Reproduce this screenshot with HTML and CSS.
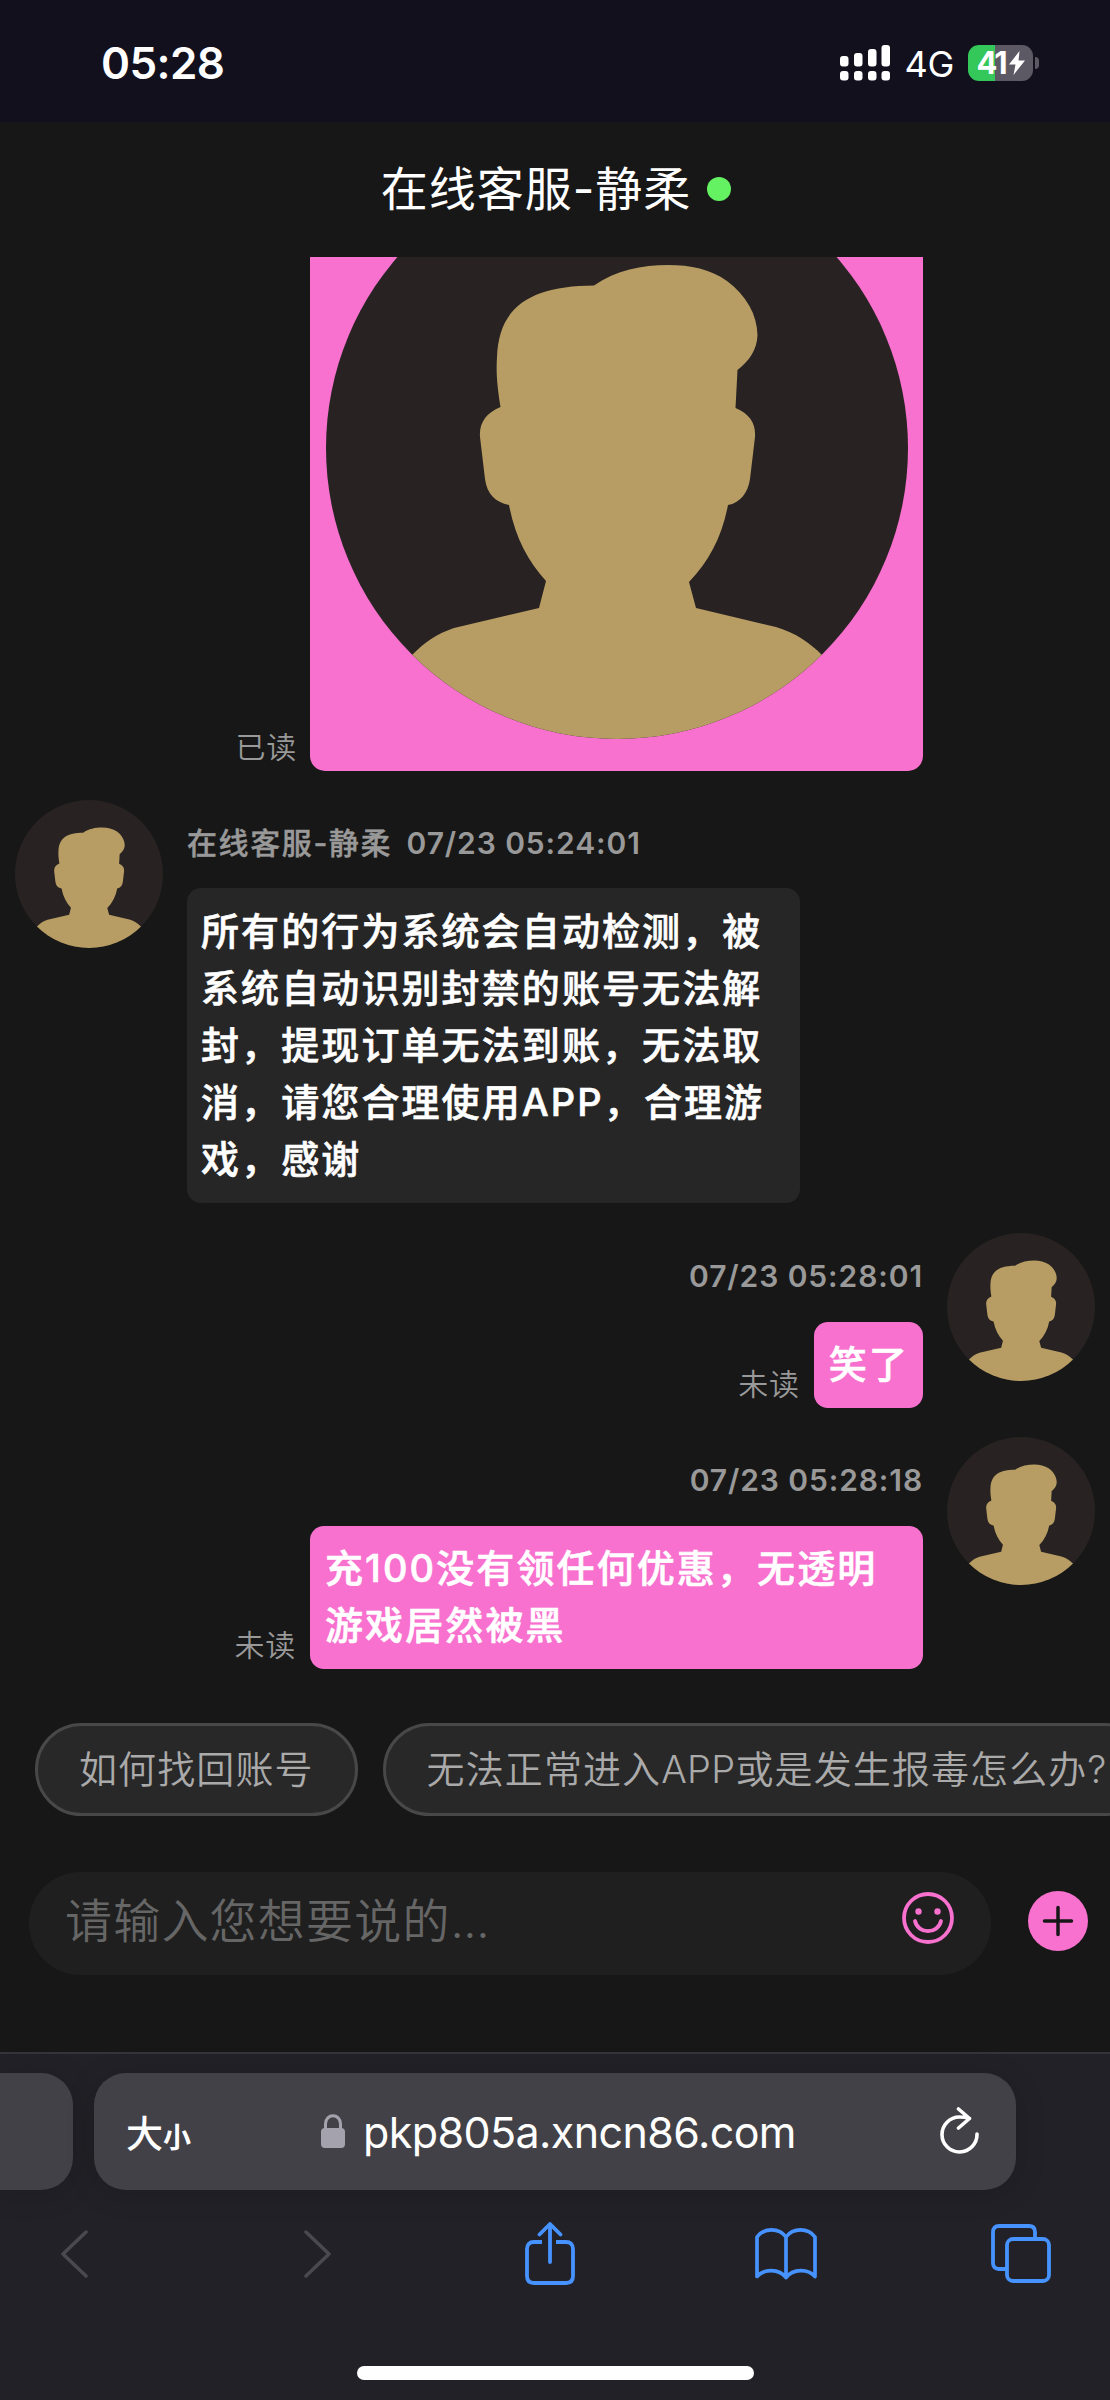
FILE: index.html
```html
<!DOCTYPE html>
<html lang="zh-CN">
<head>
<meta charset="utf-8">
<title>在线客服</title>
<link rel="stylesheet" href="styles.css">
</head>
<body>
<svg class="defs" aria-hidden="true">
  <defs>
    <clipPath id="disc"><circle cx="291" cy="291" r="291"/></clipPath>
    <symbol id="person" viewBox="0 0 582 582">
      <circle cx="291" cy="291" r="291" fill="#282322"/>
      <path clip-path="url(#disc)" fill="#b79d63" d="M268 128.500C290 113 316 108 342 108C365 108 384 112 401 124C421 139 431 158 431.500 178C431 193 423 204 411.500 213L409.500 251C424 257 430 267 429 280L424 322C422 336 414 346 402 348C396 380 383 404 363 425L370 451L450 470C470 476 484 486 496 498L510 600H72L86 498C98 486 110 477 128 471L213 451L220 424C202 404 189 380 183 348C169 345 161 337 159 322L154 280C153 266 160 256 174.500 250C171 228 170 215 171 200C173 147 208 129 268 128.500Z"/>
    </symbol>
  </defs>
</svg>

<header class="status">
  <span class="clock">05:28</span>
  <div class="indicators">
    <svg class="signal" width="50" height="36" viewBox="0 0 50 36" fill="#fff">
      <rect x="0" y="11" width="8.500" height="10.500" rx="3"/><rect x="14" y="8" width="8.500" height="13.500" rx="3"/><rect x="28" y="4" width="8.500" height="17.500" rx="3"/><rect x="41.500" y="0" width="8.500" height="21.500" rx="3"/>
      <rect x="0" y="26" width="8.500" height="9.500" rx="3"/><rect x="14" y="26" width="8.500" height="9.500" rx="3"/><rect x="28" y="26" width="8.500" height="9.500" rx="3"/><rect x="41.500" y="26" width="8.500" height="9.500" rx="3"/>
    </svg>
    <span class="network">4G</span>
    <div class="battery">
      <span class="charge">41</span>
      <svg width="16" height="24" viewBox="0 0 16 24"><path fill="#fff" d="M10.500 0L0 13.500H6.500L4.500 24L16 9.500H9.500Z"/></svg>
    </div>
    <span class="battery-cap"></span>
  </div>
</header>

<div class="title"><h1>在线客服-静柔</h1><span class="online"></span></div>

<main class="chat">
  <section class="msg mine image-msg">
    <span class="read">已读</span>
    <div class="photo"><svg width="582" height="582"><use href="#person"/></svg></div>
  </section>

  <section class="msg theirs">
    <svg class="avatar" width="148" height="148"><use href="#person"/></svg>
    <div class="content">
      <div class="meta"><span class="name">在线客服-静柔</span> <time>07/23 05:24:01</time></div>
      <div class="bubble">所有的行为系统会自动检测，被<br>系统自动识别封禁的账号无法解<br>封，提现订单无法到账，无法取<br>消，请您合理使用APP，合理游<br>戏，感谢</div>
    </div>
  </section>

  <section class="msg mine first">
    <div class="content">
      <div class="meta"><time>07/23 05:28:01</time></div>
      <div class="line"><span class="read">未读</span><div class="bubble">笑了</div></div>
    </div>
    <svg class="avatar" width="148" height="148"><use href="#person"/></svg>
  </section>

  <section class="msg mine second">
    <div class="content">
      <div class="meta"><time>07/23 05:28:18</time></div>
      <div class="line"><span class="read">未读</span><div class="bubble wide">充100没有领任何优惠，无透明<br>游戏居然被黑</div></div>
    </div>
    <svg class="avatar" width="148" height="148"><use href="#person"/></svg>
  </section>
</main>

<nav class="chips">
  <span class="chip">如何找回账号</span>
  <span class="chip">无法正常进入<span class="latin">APP</span>或是发生报毒怎么办?</span>
</nav>

<div class="composer">
  <div class="field">
    <span class="placeholder">请输入您想要说的<span class="dots">...</span></span>
    <svg width="52" height="52" viewBox="0 0 52 52" fill="none" stroke="#f871cf" stroke-width="3.800" stroke-linecap="round"><circle cx="26" cy="26" r="24"/><path d="M13 29C16 42.500 36 42.500 39 29"/><circle cx="16.500" cy="19.500" r="3.200" fill="#f871cf" stroke="none"/><circle cx="35.500" cy="19.500" r="3.200" fill="#f871cf" stroke="none"/></svg>
  </div>
  <svg class="plus" width="60" height="60" viewBox="0 0 60 60"><circle cx="30" cy="30" r="30" fill="#f871cf"/><path d="M30 16.500V43.500M16.500 30H43.500" stroke="#171717" stroke-width="3.500" stroke-linecap="round"/></svg>
</div>

<footer class="browser">
  <div class="tabs">
    <div class="prev-tab"></div>
    <div class="address">
      <span class="aa"><b>大</b><small>小</small></span>
      <span class="url"><svg width="24" height="35" viewBox="0 0 24 35"><rect x="0" y="14" width="24" height="20" rx="4" fill="#a4a3ad"/><path d="M4.500 16V10C4.500 -1 19.500 -1 19.500 10V16" fill="none" stroke="#a4a3ad" stroke-width="3"/></svg>pkp805a.xncn86.com</span>
      <svg class="reload" width="40" height="48" viewBox="0 0 40 48" fill="none" stroke="#fff" stroke-width="3.600" stroke-linecap="round" stroke-linejoin="round"><path d="M37 27A17.500 17.500 0 1 1 19.500 10Q25 10 29.500 11.500M18.500 2L29.500 11.500L18.500 21"/></svg>
    </div>
  </div>
  <div class="tools">
    <svg width="27" height="48" viewBox="0 0 27 48" fill="none" stroke="#4a494f" stroke-width="3.500" stroke-linecap="round" stroke-linejoin="round"><path d="M25 2L2 24L25 46"/></svg>
    <svg class="forward" width="27" height="48" viewBox="0 0 27 48" fill="none" stroke="#4a494f" stroke-width="3.500" stroke-linecap="round" stroke-linejoin="round"><path d="M2 2L25 24L2 46"/></svg>
    <svg class="share" width="50" height="64" viewBox="0 0 50 64" fill="none" stroke="#4692ff" stroke-width="3.800" stroke-linejoin="round"><path d="M17 20H9Q2 20 2 27V54Q2 61 9 61H41Q48 61 48 54V27Q48 20 41 20H31"/><path stroke-linecap="round" d="M25 40V3M14.500 12.500L25 2L35.500 12.500"/></svg>
    <svg class="book" width="62" height="52" viewBox="0 0 62 52" fill="none" stroke="#4692ff" stroke-width="3.700" stroke-linecap="round" stroke-linejoin="round"><path d="M31 9C24 -.5 9 -.5 2 9V48.500C9 40.500 24 40.500 31 49.500C38 40.500 53 40.500 60 48.500V9C53 -.5 38 -.5 31 9V49"/></svg>
    <svg class="pages" width="60" height="60" viewBox="0 0 60 60" fill="none" stroke="#4692ff" stroke-width="3.800" stroke-linejoin="round"><rect x="16" y="15" width="42" height="42" rx="6"/><path d="M16 45H8Q2 45 2 39V8Q2 2 8 2H38Q44 2 44 8V15"/></svg>
  </div>
  <div class="home"></div>
</footer>
</body>
</html>
```
FILE: styles.css
```css
* { box-sizing: border-box; margin: 0; padding: 0; }
body {
  width: 1110px; height: 2400px; overflow: hidden;
  display: flex; flex-direction: column;
  background: #171717; color: #fff;
  font-family: Inter, "Noto Sans CJK SC", sans-serif;
}
svg { display: block; flex: none; }
.defs { position: absolute; width: 0; height: 0; }

.status { height: 122px; flex: none; background: #13101e; display: flex; justify-content: space-between; align-items: center; padding: 3px 71px 0 101px; }
.clock { font-size: 44px; font-weight: 600; letter-spacing: -.6px; }
.indicators { display: flex; align-items: center; }
.network { font-size: 36px; margin: 2px 14px 0 14px; letter-spacing: -.3px; }
.battery { width: 65px; height: 36px; border-radius: 11px; background: linear-gradient(90deg, #34c759 27px, #5c5965 27px); display: flex; align-items: center; justify-content: center; gap: 3px; }
.charge { font-size: 31px; font-weight: 700; letter-spacing: -2px; }
.battery-cap { width: 4px; height: 12px; margin-left: 2px; border-radius: 0 6px 6px 0; background: #5c5965; }

.title { height: 135px; flex: none; display: flex; align-items: center; justify-content: center; gap: 16px; padding-left: 2px; }
.title h1 { font-size: 47px; font-weight: 400; letter-spacing: 1px; margin-top: -8px; }
.online { width: 24px; height: 24px; border-radius: 50%; background: #65f262; margin-top: -2px; }

.chat { height: 1414px; flex: none; }
.msg { display: flex; align-items: flex-start; }
.mine { justify-content: flex-end; padding-right: 15px; gap: 24px; }
.image-msg { height: 514px; align-items: flex-end; gap: 13px; padding-right: 187px; }
.photo { width: 613px; height: 514px; background: #f871cf; border-radius: 0 0 15px 15px; overflow: hidden; display: flex; align-items: flex-end; padding: 0 0 32px 16px; }
.read { color: #999; font-size: 30px; font-weight: 350; letter-spacing: .8px; line-height: 47px; }
.theirs { padding: 29px 0 0 15px; gap: 24px; }
.first { padding-top: 30px; }
.second { padding-top: 29px; }
.meta { height: 88px; line-height: 86px; font-size: 30px; font-weight: 600; color: #999; letter-spacing: .9px; white-space: pre; }
.name { font-weight: 500; letter-spacing: 1.600px; -webkit-text-stroke: .4px; }
.meta time { margin-left: 6px; }
.mine .meta { text-align: right; height: 89px; }
.line { display: flex; justify-content: flex-end; align-items: flex-end; gap: 14px; }
.bubble { background: #262626; border-radius: 14px; padding: 15px 14px 15px 15px; font-size: 38px; line-height: 57px; font-weight: 500; letter-spacing: 2.100px; -webkit-text-stroke: .6px; white-space: nowrap; }
.theirs .bubble { width: 613px; padding-left: 14px; }
.mine .bubble { background: #f871cf; padding-top: 14px; }
.mine .wide { width: 613px; }

.chips { height: 145px; flex: none; display: flex; gap: 25px; padding: 52px 0 0 35px; overflow: hidden; }
.chip { flex: none; height: 93px; border: 3px solid #484848; border-radius: 47px; background: #282828; color: #aaa; padding: 0 41px; font-size: 38px; line-height: 87px; letter-spacing: 1.100px; font-weight: 350; }
.latin { letter-spacing: .3px; }

.composer { height: 236px; flex: none; display: flex; align-items: flex-start; padding: 56px 22px 0 29px; justify-content: space-between; }
.field { width: 962px; height: 103px; border-radius: 51px; background: #1f1f1f; display: flex; align-items: center; justify-content: space-between; padding: 0 37px; }
.field svg { margin-top: -11px; }
.placeholder { color: #666; font-size: 47px; letter-spacing: 1.200px; font-weight: 350; margin: -12px 0 0 -1px; }
.dots { letter-spacing: -.5px; }
.plus { margin-top: 19px; }

.browser { height: 348px; flex: none; background: #222127; border-top: 2px solid #353439; display: flex; flex-direction: column; }
.tabs { display: flex; gap: 21px; padding-top: 19px; }
.prev-tab { width: 73px; height: 117px; border-radius: 0 32px 32px 0; background: #424147; box-shadow: 0 4px 30px rgba(0,0,0,.15); }
.address { width: 922px; height: 117px; border-radius: 32px; background: #424147; box-shadow: 0 4px 30px rgba(0,0,0,.15); display: flex; align-items: center; padding: 0 36px 0 32px; }
.aa { width: 195px; flex: none; display: flex; align-items: baseline; }
.aa b { font-size: 37px; font-weight: 500; }
.aa small { font-size: 28px; font-weight: 600; }
.url { display: flex; align-items: center; gap: 18px; font-size: 43px; letter-spacing: -.6px; }
.reload { margin-left: auto; margin-top: -2px; }
.tools { display: flex; align-items: center; height: 64px; margin-top: 32px; padding-left: 61px; }
.forward { margin-left: 216px; }
.share { margin-left: 194px; margin-top: -1px; }
.book { margin-left: 180px; }
.pages { margin-left: 174px; }
.home { width: 397px; height: 14px; border-radius: 7px; background: #fff; margin: 80px auto 0; }
```
